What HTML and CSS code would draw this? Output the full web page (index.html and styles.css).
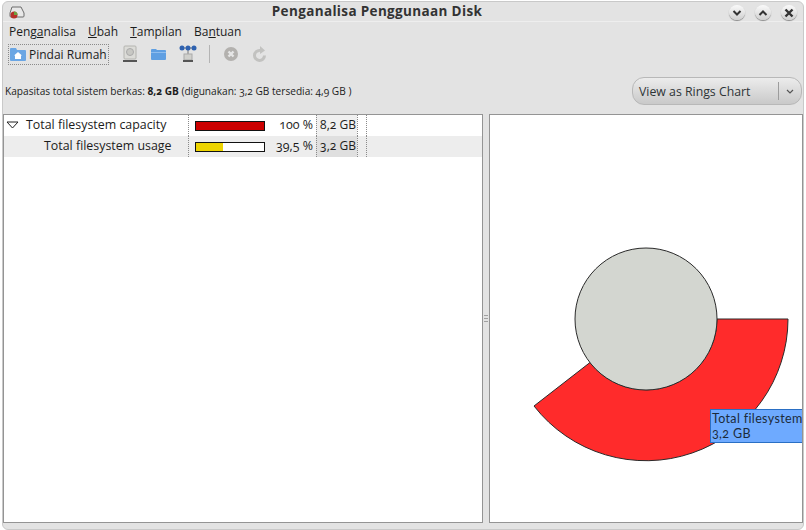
FILE: index.html
```html
<!DOCTYPE html>
<html lang="en">
<head>
    <meta charset="UTF-8">
    <title>Penganalisa Penggunaan Disk</title>
    <link rel="stylesheet" href="styles.css">
</head>
<body>
    <div class="window">
        <!-- Title bar -->
        <header class="titlebar">
            <svg class="app-icon" width="16" height="16" viewBox="0 0 16 16">
                <path d="M3 3h9l3 6v3a1 1 0 0 1-1 1H2a1 1 0 0 1-1-1V9z" fill="#e8e8e8" stroke="#6d6d6d"/>
                <circle cx="5" cy="11" r="3.5" fill="#b5302a"/>
                <path d="M5 11V7.500a3.500 3.500 0 0 1 3.500 3.500z" fill="#6fa03c"/>
            </svg>
            <h1 class="title">Penganalisa Penggunaan Disk</h1>
            <div class="win-buttons">
                <button class="win-btn">
                    <svg width="10" height="8" viewBox="0 0 10 8"><path d="M1.500 2L5 5.500 8.500 2" fill="none" stroke="#333" stroke-width="2"/></svg>
                </button>
                <button class="win-btn">
                    <svg width="10" height="8" viewBox="0 0 10 8"><path d="M1.500 6L5 2.500 8.500 6" fill="none" stroke="#333" stroke-width="2"/></svg>
                </button>
                <button class="win-btn">
                    <svg width="10" height="10" viewBox="0 0 10 10"><path d="M1.500 1.500l7 7M8.500 1.500l-7 7" fill="none" stroke="#333" stroke-width="2.400"/></svg>
                </button>
            </div>
        </header>

        <!-- Menu -->
        <nav class="menubar">
            <span>Peng<u>a</u>nalisa</span>
            <span><u>U</u>bah</span>
            <span><u>T</u>ampilan</span>
            <span>Ba<u>n</u>tuan</span>
        </nav>

        <!-- Toolbar -->
        <div class="toolbar">
            <button class="tool-home">
                <svg width="16" height="14" viewBox="0 0 16 14">
                    <path d="M0 2a1 1 0 0 1 1-1h5l1 2h8a1 1 0 0 1 1 1v9a1 1 0 0 1-1 1H1a1 1 0 0 1-1-1z" fill="#6aa6e4"/>
                    <path d="M8 5l4 3.500h-1V12H5V8.500H4z" fill="#fff"/>
                </svg>
                Pindai Rumah
            </button>
            <svg class="tool-icon" width="16" height="18" viewBox="0 0 16 18">
                <rect x="2" y="1" width="12" height="13" rx="1" fill="#dcdcd8" stroke="#b4b4b0"/>
                <circle cx="8" cy="7" r="3.500" fill="#c8c8c4" stroke="#aaa"/>
                <rect x="1" y="15" width="14" height="2" fill="#555"/>
            </svg>
            <svg class="tool-icon" width="15" height="12" viewBox="0 0 15 12">
                <path d="M0 2a1 1 0 0 1 1-1h4l1 1h8a1 1 0 0 1 1 1v8a1 1 0 0 1-1 1H1a1 1 0 0 1-1-1z" fill="#5f9fe2"/>
                <rect y="4" width="15" height="1" fill="#8fbdee"/>
            </svg>
            <svg class="tool-icon" width="18" height="18" viewBox="0 0 18 18">
                <path d="M3 3h12M9 3v8" stroke="#777" fill="none"/>
                <circle cx="3" cy="3" r="2.500" fill="#2f62b0"/>
                <circle cx="9" cy="3" r="2.500" fill="#2f62b0"/>
                <circle cx="15" cy="3" r="2.500" fill="#2f62b0"/>
                <rect x="5" y="9" width="8" height="6" fill="#d0d0cc" stroke="#aaa"/>
                <rect x="4" y="15" width="10" height="2" fill="#555"/>
            </svg>
            <span class="tool-sep"></span>
            <svg class="tool-icon" width="16" height="16" viewBox="0 0 16 16">
                <circle cx="8" cy="8" r="7" fill="#b3b1ae"/>
                <path d="M5.500 5.500l5 5M10.500 5.500l-5 5" stroke="#e6e6e6" stroke-width="2.400"/>
            </svg>
            <svg class="tool-icon" width="16" height="16" viewBox="0 0 16 16">
                <path d="M12.500 9.500A5 5 0 1 1 8 4.500" fill="none" stroke="#c2c2c0" stroke-width="3"/>
                <path d="M8 0l5 4.500L8 8z" fill="#c2c2c0"/>
            </svg>
        </div>

        <!-- Capacity line and view selector -->
        <div class="infobar">
            <p class="capacity">Kapasitas total sistem berkas: <b>8,2 GB</b> (digunakan: 3,2 GB tersedia: 4,9 GB )</p>
            <div class="view-select">
                <span class="view-label">View as Rings Chart</span>
                <span class="view-arrow">
                    <svg width="8" height="5" viewBox="0 0 8 5"><path d="M1 1l3 3 3-3" fill="none" stroke="#555" stroke-width="1.200"/></svg>
                </span>
            </div>
        </div>

        <!-- Tree and chart panes -->
        <main class="panes">
            <section class="tree-pane">
                <div class="row">
                    <div class="col-name">
                        <svg class="expander" width="13" height="8" viewBox="0 0 13 8"><path d="M1 1h11L6.500 7z" fill="#fff" stroke="#222"/></svg>
                        Total filesystem capacity
                    </div>
                    <div class="col-bar"><div class="bar"><div class="bar-fill fill-red" style="width: 100%"></div></div></div>
                    <div class="col-pct">100 %</div>
                    <div class="col-size">8,2 GB</div>
                    <div class="col-end"></div>
                </div>
                <div class="row row-alt">
                    <div class="col-name col-child">Total filesystem usage</div>
                    <div class="col-bar"><div class="bar"><div class="bar-fill fill-yellow" style="width: 39.5%"></div></div></div>
                    <div class="col-pct">39,5 %</div>
                    <div class="col-size">3,2 GB</div>
                    <div class="col-end"></div>
                </div>
            </section>

            <div class="grip"><span></span><span></span><span></span></div>

            <section class="chart-pane">
                <svg class="rings" width="312" height="407" viewBox="490 115 312 407">
                    <path d="M788 319A142 142 0 0 1 534 406L590 362.500A71 71 0 0 0 717 319z" fill="#ff2b2b" stroke="#2a2a2a"/>
                    <circle cx="646" cy="319" r="71" fill="#d3d6d0" stroke="#2a2a2a"/>
                </svg>
                <div class="tooltip">
                    <div>Total filesystem</div>
                    <div>3,2 GB</div>
                </div>
            </section>
        </main>
    </div>
</body>
</html>
```

FILE: styles.css
```css
* {
    box-sizing: border-box;
}

html, body {
    height: 100%;
}

body {
    margin: 0;
    background: #fff;
    font-family: "Open Sans", sans-serif;
    font-variant-numeric: oldstyle-nums;
    color: #1c1c1c;
    overflow: hidden;
}

.window {
    width: 802px;
    height: 529px;
    margin: 1px 0 0 2px;
    background: #e3e3e3;
    border: 1px solid #c9c9c9;
    border-radius: 6px;
    display: flex;
    flex-direction: column;
}

.titlebar {
    height: 20px;
    flex: none;
    display: flex;
    align-items: center;
    padding: 0 6px;
    border-bottom: 1px solid #eeeeee;
}

.title {
    flex: 1;
    margin: 0 0 2px;
    text-align: center;
    font-size: 13.500px;
    font-weight: 700;
    color: #333;
    letter-spacing: 0.35px;
}

.win-buttons {
    display: flex;
    gap: 10px;
    margin-top: 2px;
}

.win-btn {
    width: 16px;
    height: 15px;
    padding: 0;
    border: none;
    border-radius: 50%;
    background: linear-gradient(#fafafa, #d0d0d0);
    box-shadow: 0 1px 1px #888;
    display: flex;
    align-items: center;
    justify-content: center;
}

.menubar {
    height: 19px;
    flex: none;
    display: flex;
    align-items: center;
    gap: 12px;
    padding-left: 6px;
    font-size: 12px;
}

.toolbar {
    height: 26px;
    flex: none;
    display: flex;
    align-items: center;
    padding-left: 5px;
}

.tool-home {
    height: 21px;
    display: flex;
    align-items: center;
    gap: 3px;
    padding: 0 1px 0 1px;
    background: none;
    border: 1px dotted #8a8a8a;
    font: inherit;
    font-size: 12px;
    color: inherit;
}

.tool-icon {
    flex: none;
    margin-left: 13px;
}

.tool-sep {
    width: 1px;
    height: 18px;
    margin: 0 0 0 12px;
    background: #b4b4b4;
}

.infobar {
    height: 47px;
    flex: none;
    display: flex;
    align-items: center;
    justify-content: space-between;
    padding: 2px 1px 1px 2px;
}

.capacity {
    margin: 0;
    font-size: 10.150px;
}

.view-select {
    width: 170px;
    height: 28px;
    display: flex;
    align-items: center;
    border: 1px solid #b8b8b8;
    border-radius: 12px;
    background: linear-gradient(#ececec, #c9c9c9);
    font-size: 12.300px;
    color: #2e3436;
}

.view-label {
    flex: 1;
    padding-left: 6px;
}

.view-arrow {
    width: 23px;
    height: 18px;
    display: flex;
    align-items: center;
    justify-content: center;
    border-left: 1px solid #9c9c9c;
}

.panes {
    flex: 1;
    display: flex;
    min-height: 0;
    margin-bottom: 6px;
}

.tree-pane {
    width: 480px;
    background: #fff;
    border: 1px solid #949494;
    font-size: 12.400px;
}

.row {
    height: 21px;
    display: flex;
    align-items: center;
}

.row-alt {
    background: #ededed;
}

.col-name {
    width: 184px;
    height: 100%;
    flex: none;
    display: flex;
    align-items: center;
    padding: 0 0 2px 2px;
    gap: 7px;
}

.col-child {
    padding-left: 40px;
}

.expander {
    flex: none;
}

.col-bar,
.col-size,
.col-end {
    height: 100%;
    display: flex;
    align-items: center;
    border-left: 1px dotted #8a8a8a;
}

.col-bar {
    width: 83px;
    padding-left: 6px;
}

.bar {
    width: 70px;
    height: 10px;
    background: #fff;
    border: 1px solid #111;
}

.bar-fill {
    height: 100%;
}

.fill-red {
    background: #cc0000;
}

.fill-yellow {
    background: #edd400;
}

.col-pct {
    width: 45px;
    text-align: right;
    padding: 0 3px 2px 0;
}

.col-size {
    width: 41px;
    justify-content: center;
    padding: 0 0 2px 2px;
    font-size: 12px;
    background: rgba(0, 0, 0, 0.06);
}

.col-end {
    width: 8px;
    box-sizing: content-box;
    border-right: 1px dotted #8a8a8a;
}

.grip {
    width: 6px;
    flex: none;
    display: flex;
    flex-direction: column;
    justify-content: center;
    gap: 2px;
    padding: 0 1px;
}

.grip span {
    height: 1px;
    background: #a0a0a0;
}

.chart-pane {
    flex: 1;
    position: relative;
    background: #fff;
    border: 1px solid #949494;
    overflow: hidden;
}

.rings {
    display: block;
}

.tooltip {
    position: absolute;
    left: 220px;
    top: 294px;
    width: 96px;
    height: 34px;
    padding: 1px;
    background: #6eaaff;
    border: 1px solid #2a6fc4;
    border-right: none;
    font-family: Lato, sans-serif;
    font-size: 12.500px;
    letter-spacing: 0.35px;
    line-height: 15px;
    color: #1c2a3a;
    white-space: nowrap;
    overflow: hidden;
}
```
